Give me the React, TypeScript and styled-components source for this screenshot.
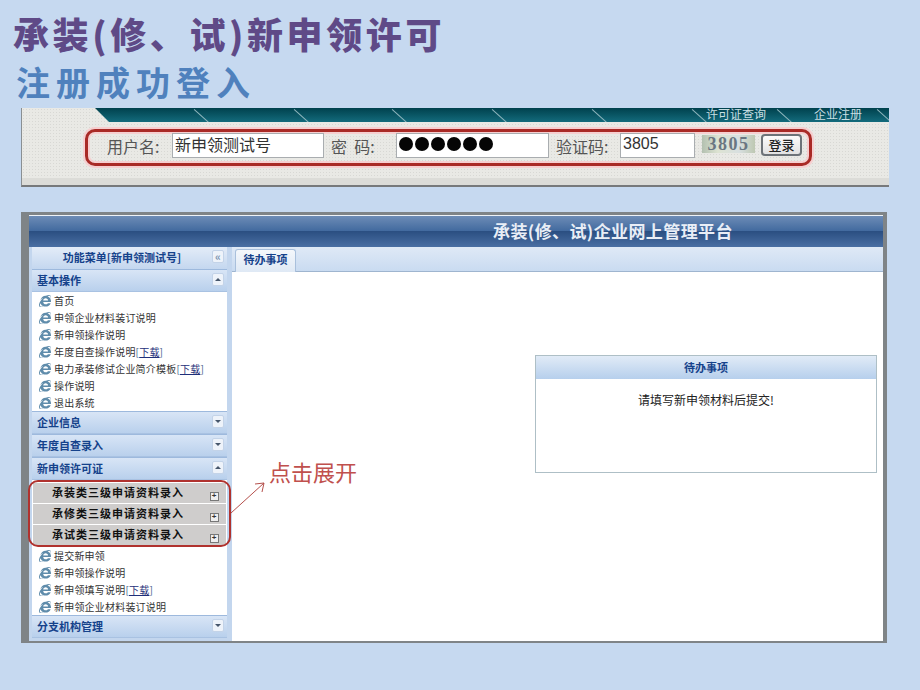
import React from "react";
import styled, { createGlobalStyle } from "styled-components";
import { FaInternetExplorer } from "react-icons/fa";

const CJK = `"Noto Sans CJK SC", "Liberation Sans", sans-serif`;

const GlobalStyle = createGlobalStyle`
    html, body {
        margin: 0;
        padding: 0;
        background: #c6d9f0;
    }
    * {
        box-sizing: border-box;
    }
`;

const Page = styled.div`
    width: 920px;
    height: 690px;
    overflow: hidden;
    background: #c6d9f0;
    font-family: ${CJK};
    padding-top: 10px;
`;

const Title = styled.h1`
    margin: 0 0 0 13px;
    height: 46px;
    font-size: 36px;
    line-height: 46px;
    font-weight: 900;
    letter-spacing: 3.6px;
    color: #5f4a87;
    white-space: nowrap;
`;

const SubTitle = styled.h2`
    margin: 5px 0 0 16px;
    height: 42px;
    font-size: 34px;
    line-height: 42px;
    font-weight: 700;
    letter-spacing: 6px;
    color: #4f81bd;
    white-space: nowrap;
`;

const LoginPanel = styled.div`
    width: 868px;
    height: 79px;
    margin: 5px 0 0 21px;
    background-color: #e9e9e5;
    background-image: radial-gradient(#d8d8d4 0.6px, transparent 0.7px);
    background-size: 3px 3px;
    border-left: 1px solid #8a8f92;
    border-bottom: 2px solid #77797b;
    box-shadow: inset 0 -7px 0 #dcdcd8;
`;

const NavBar = styled.div`
    height: 14px;
    margin-left: 73px;
    padding-left: 2px;
    display: flex;
    background: linear-gradient(#00414d, #136b7c);
    clip-path: polygon(0 0, 100% 0, 100% 100%, 14px 100%);
    overflow: hidden;
`;

const NavTab = styled.div<{ $width: number; $shift: number }>`
    position: relative;
    flex: none;
    width: ${({ $width }) => $width}px;
    height: 14px;
    padding-right: ${({ $shift }) => $shift}px;
    font-size: 12px;
    line-height: 12px;
    color: #c8dfe3;
    text-align: center;

    &::after {
        content: "";
        position: absolute;
        right: 6px;
        top: -2px;
        width: 1px;
        height: 20px;
        background: #8fb6bd;
        transform: rotate(-48deg);
    }
`;

const LoginForm = styled.div`
    position: relative;
    width: 727px;
    height: 37px;
    margin: 7px 0 0 63px;
    padding: 0 0 4px 19px;
    display: flex;
    align-items: center;
    border: 3px solid #a92a26;
    border-radius: 10px;
    box-shadow: 0 0 0 2px #f6cfd0, inset 0 0 0 2px #f6cfd0;
`;

const FieldLabel = styled.span<{ $width: number }>`
    flex: none;
    width: ${({ $width }) => $width}px;
    padding-top: 1px;
    font-size: 16px;
    color: #555;
    white-space: pre;
`;

const TextField = styled.div<{ $width: number }>`
    flex: none;
    width: ${({ $width }) => $width}px;
    height: 25px;
    margin-right: 7px;
    padding: 0 2px 4px;
    display: flex;
    align-items: center;
    gap: 2px;
    background: #fff;
    border: 1px solid #a9adb0;
    font-size: 16px;
    line-height: 20px;
    color: #333;
`;

const FieldValue = styled.span`
    font-family: "Liberation Sans", ${CJK};
`;

const Dot = styled.i`
    flex: none;
    width: 14px;
    height: 14px;
    border-radius: 50%;
    background: #050505;
`;

const Captcha = styled.div`
    flex: none;
    width: 53px;
    height: 18px;
    margin: -4px 6px 0 0;
    background: linear-gradient(90deg, #b3c0b0, #dde3d2 30%, #d8dfe0 70%, #bec8b2);
    font-family: "Liberation Serif", serif;
    font-size: 18px;
    font-weight: 700;
    line-height: 18px;
    letter-spacing: 1.5px;
    text-align: center;
    color: #6a7682;
`;

const LoginButton = styled.div`
    flex: none;
    width: 41px;
    height: 22px;
    margin-top: -1px;
    background: linear-gradient(#fbfbfb, #e2e2e2);
    border: 2px solid #6d7378;
    border-radius: 4px;
    font-size: 13px;
    font-weight: 500;
    line-height: 17px;
    text-align: center;
    color: #222;
`;

const AppFrame = styled.div`
    position: relative;
    width: 866px;
    height: 431px;
    margin: 25px 0 0 21px;
    border-style: solid;
    border-color: #7f8487;
    border-width: 3px 4px 2px 8px;
    background: #fff;
    display: flex;
    flex-direction: column;
`;

const AppHeader = styled.div`
    flex: none;
    height: 32px;
    padding: 0 0 0 464px;
    border-top: 1px solid #eef2f7;
    background: linear-gradient(#6d8cb6 0, #426a9f 48%, #2b4f82 50%, #4a6fa3 100%);
    font-size: 17px;
    font-weight: 700;
    line-height: 29px;
    letter-spacing: 0.4px;
    color: #e9eef6;
    white-space: nowrap;
`;

const AppBody = styled.div`
    flex: 1;
    min-height: 0;
    display: flex;
`;

const Sidebar = styled.div`
    flex: none;
    width: 203px;
    padding: 0 5px 0 3px;
    background: #c3d6ee;
    display: flex;
    flex-direction: column;
`;

const SideTitle = styled.div`
    position: relative;
    flex: none;
    height: 22px;
    padding-right: 15px;
    background: linear-gradient(#e3ecf8, #c4d7ef);
    font-size: 11px;
    font-weight: 700;
    line-height: 21px;
    text-align: center;
    color: #15428b;
`;

const SectionHeader = styled.div`
    position: relative;
    flex: none;
    height: 23px;
    padding-left: 5px;
    background: linear-gradient(#d8e5f6, #b9d0ec);
    border-top: 1px solid #9db9dd;
    border-bottom: 1px solid #a9c2e2;
    font-size: 11px;
    font-weight: 700;
    line-height: 20px;
    color: #15428b;
`;

const Toggle = styled.span`
    position: absolute;
    right: 3px;
    top: 3px;
    width: 12px;
    height: 13px;
    display: flex;
    align-items: center;
    justify-content: center;
    background: #eef3fa;
    border: 1px solid #c3d3e8;
    border-radius: 2px;
    font-size: 11px;
    line-height: 1;
    color: #7c93b0;
`;

const Caret = styled.i<{ $up?: boolean }>`
    width: 0;
    height: 0;
    border-left: 3px solid transparent;
    border-right: 3px solid transparent;
    border-bottom: ${({ $up }) => ($up ? "3px solid #46566b" : "0")};
    border-top: ${({ $up }) => ($up ? "0" : "3px solid #46566b")};
`;

const MenuList = styled.div`
    flex: none;
    padding-left: 7px;
    background: #fff;
`;

const MenuItem = styled.div`
    height: 17px;
    display: flex;
    align-items: center;
    gap: 3px;
    font-size: 10px;
    letter-spacing: 0.2px;
    line-height: 17px;
    color: #333;
    white-space: nowrap;

    svg {
        flex: none;
        width: 12px;
        height: 12px;
        color: #5f8cab;
    }
`;

const DownloadLink = styled.span`
    color: #4a5f8a;

    u {
        color: #1f2f7a;
    }
`;

const ApplyGroup = styled.div`
    position: relative;
    flex: none;
    padding: 3px 1px 2px;
    background: #fff;
    display: flex;
    flex-direction: column;
    gap: 1px;

    &::after {
        content: "";
        position: absolute;
        inset: 0 -4px 0 -4px;
        border: 2px solid #b0322e;
        border-radius: 10px;
    }
`;

const ApplyRow = styled.div`
    position: relative;
    height: 20px;
    padding-left: 19px;
    padding-top: 1px;
    background: #cfcdcc;
    font-size: 11px;
    font-weight: 700;
    letter-spacing: 1px;
    line-height: 16px;
    color: #111;
`;

const Expander = styled.span`
    position: absolute;
    right: 7px;
    bottom: 2px;
    width: 9px;
    height: 9px;
    background: #eee;
    border: 1px solid #777;
    font-size: 8px;
    line-height: 6px;
    text-align: center;
    font-family: "Liberation Sans", sans-serif;
    color: #333;
`;

const Content = styled.div`
    flex: 1;
    min-width: 0;
    display: flex;
    flex-direction: column;
`;

const TabStrip = styled.div`
    flex: none;
    height: 25px;
    padding: 2px 0 0 3px;
    background: linear-gradient(#dfe9f6, #c9dbf1);
    border-bottom: 1px solid #9fb5cf;
`;

const Tab = styled.div`
    width: 61px;
    height: 23px;
    background: linear-gradient(#f4f7fb, #dfe9f5);
    border: 1px solid #a9c0dc;
    border-bottom: 0;
    border-radius: 3px 3px 0 0;
    font-size: 11px;
    font-weight: 700;
    line-height: 18px;
    text-align: center;
    color: #15428b;
`;

const TabPane = styled.div`
    flex: 1;
    padding: 83px 6px 0 0;
    display: flex;
    justify-content: flex-end;
    align-items: flex-start;
`;

const TodoCard = styled.div`
    width: 342px;
    height: 118px;
    border: 1px solid #aebfc6;
`;

const TodoHeader = styled.div`
    height: 23px;
    background: linear-gradient(#e1ebf7, #b6cfec);
    font-size: 11px;
    font-weight: 700;
    line-height: 22px;
    text-align: center;
    color: #15428b;
`;

const TodoBody = styled.div`
    padding: 12px 0 0 0;
    font-size: 12px;
    line-height: 18px;
    text-align: center;
    color: #222;
`;

const Callout = styled.div`
    position: absolute;
    left: 240px;
    top: 241px;
    font-size: 22px;
    line-height: 30px;
    color: #c0504d;
    white-space: nowrap;
`;

const CalloutArrow = styled.svg`
    position: absolute;
    left: 200px;
    top: 263px;
`;

interface MenuEntry {
    label: string;
    download?: boolean;
}

const basicItems: MenuEntry[] = [
    { label: "首页" },
    { label: "申领企业材料装订说明" },
    { label: "新申领操作说明" },
    { label: "年度自查操作说明", download: true },
    { label: "电力承装修试企业简介模板", download: true },
    { label: "操作说明" },
    { label: "退出系统" },
];

const applyItems: MenuEntry[] = [
    { label: "提交新申领" },
    { label: "新申领操作说明" },
    { label: "新申领填写说明", download: true },
    { label: "新申领企业材料装订说明" },
];

const navTabs = [
    { label: "", width: 111, shift: 0 },
    { label: "", width: 100, shift: 0 },
    { label: "", width: 98, shift: 0 },
    { label: "", width: 100, shift: 0 },
    { label: "", width: 100, shift: 0 },
    { label: "", width: 100, shift: 0 },
    { label: "许可证查询", width: 85, shift: 25 },
    { label: "企业注册", width: 100, shift: 6 },
];

const applyRows = ["承装类三级申请资料录入", "承修类三级申请资料录入", "承试类三级申请资料录入"];

const Menu = ({ items }: { items: MenuEntry[] }) => (
    <MenuList>
        {items.map((item) => (
            <MenuItem key={item.label}>
                <FaInternetExplorer />
                <span>
                    {item.label}
                    {item.download && (
                        <DownloadLink>
                            [<u>下载</u>]
                        </DownloadLink>
                    )}
                </span>
            </MenuItem>
        ))}
    </MenuList>
);

const Section = ({ title, open }: { title: string; open?: boolean }) => (
    <SectionHeader>
        {title}
        <Toggle>
            <Caret $up={open} />
        </Toggle>
    </SectionHeader>
);

const App: React.FC = () => (
    <Page>
        <GlobalStyle />
        <Title>承装(修、试)新申领许可</Title>
        <SubTitle>注册成功登入</SubTitle>

        <LoginPanel>
            <NavBar>
                {navTabs.map((tab, index) => (
                    <NavTab key={index} $width={tab.width} $shift={tab.shift}>
                        {tab.label}
                    </NavTab>
                ))}
            </NavBar>
            <LoginForm>
                <FieldLabel $width={65}>用户名:</FieldLabel>
                <TextField $width={152}>新申领测试号</TextField>
                <FieldLabel $width={65}>{"密  码:"}</FieldLabel>
                <TextField $width={153}>
                    {[0, 1, 2, 3, 4, 5].map((n) => (
                        <Dot key={n} />
                    ))}
                </TextField>
                <FieldLabel $width={64}>验证码:</FieldLabel>
                <TextField $width={75}>
                    <FieldValue>3805</FieldValue>
                </TextField>
                <Captcha>3805</Captcha>
                <LoginButton>登录</LoginButton>
            </LoginForm>
        </LoginPanel>

        <AppFrame>
            <AppHeader>承装(修、试)企业网上管理平台</AppHeader>
            <AppBody>
                <Sidebar>
                    <SideTitle>
                        功能菜单[新申领测试号]
                        <Toggle>«</Toggle>
                    </SideTitle>
                    <Section title="基本操作" open />
                    <Menu items={basicItems} />
                    <Section title="企业信息" />
                    <Section title="年度自查录入" />
                    <Section title="新申领许可证" open />
                    <ApplyGroup>
                        {applyRows.map((row) => (
                            <ApplyRow key={row}>
                                {row}
                                <Expander>+</Expander>
                            </ApplyRow>
                        ))}
                    </ApplyGroup>
                    <Menu items={applyItems} />
                    <Section title="分支机构管理" />
                </Sidebar>
                <Content>
                    <TabStrip>
                        <Tab>待办事项</Tab>
                    </TabStrip>
                    <TabPane>
                        <TodoCard>
                            <TodoHeader>待办事项</TodoHeader>
                            <TodoBody>请填写新申领材料后提交!</TodoBody>
                        </TodoCard>
                    </TabPane>
                </Content>
            </AppBody>
            <Callout>点击展开</Callout>
            <CalloutArrow width="40" height="36" viewBox="0 0 40 36" fill="none" stroke="#b5504c" strokeWidth="1">
                <path d="M2 35 L35 5" />
                <path d="M26 6 L35 5 L33 14" />
            </CalloutArrow>
        </AppFrame>
    </Page>
);

export default App;
